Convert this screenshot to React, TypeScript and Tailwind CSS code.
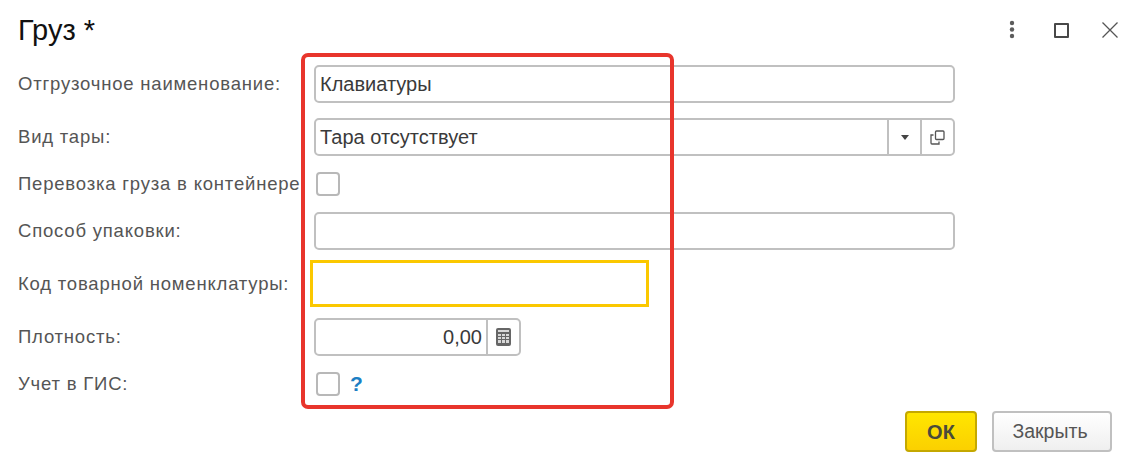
const Label = ({ children }: { children: string }) => (
  <div className="w-[297px] shrink-0 pl-[18px] whitespace-nowrap text-[18.5px] leading-[24px] tracking-[0.8px] text-[#555555]">{children}</div>
)

const Checkbox = () => (
  <div className="w-[24px] h-[24px] ml-[19px] rounded-[4px] border-2 border-[#b8b8b8] bg-white" />
)

const fieldClass = "h-[38px] ml-[17px] rounded-[5px] border-2 border-[#c0c0c0] bg-white flex items-center"

export default function App() {
  return (
    <div className="relative w-[1138px] h-[469px] bg-white overflow-hidden" style={{ fontFamily: '"Liberation Sans", Arial, sans-serif' }}>
      <div className="h-[65px] flex items-start">
        <h1 className="pl-[18px] pt-[13px] text-[29px] leading-[34px] text-[#111111] flex-1">Груз *</h1>
        <div className="flex items-center pt-[20px] pr-[20px]">
          <svg width="8" height="20" viewBox="0 0 8 20" className="mr-[38px]" fill="#5c5c5c">
            <circle cx="4" cy="3" r="2.2" />
            <circle cx="4" cy="9.5" r="2.2" />
            <circle cx="4" cy="16" r="2.2" />
          </svg>
          <div className="w-[15px] h-[15px] mr-[33px] border-2 border-[#484848] rounded-[1px]" />
          <svg width="16" height="16" viewBox="0 0 16 16" fill="none" stroke="#555555" strokeWidth="1.3">
            <path d="M0.5 0.5 L15.5 15.5 M15.5 0.5 L0.5 15.5" />
          </svg>
        </div>
      </div>

      <div className="flex items-center">
        <Label>Отгрузочное наименование:</Label>
        <div className={`${fieldClass} w-[641px] pl-[4px] text-[20px] text-[#3a3a3a]`}>Клавиатуры</div>
      </div>

      <div className="flex items-center mt-[15px]">
        <Label>Вид тары:</Label>
        <div className={`${fieldClass} w-[641px] text-[20px] text-[#3a3a3a]`}>
          <div className="flex-1 pl-[4px]">Тара отсутствует</div>
          <div className="w-[33px] h-full border-l-2 border-[#c0c0c0] flex items-center justify-center">
            <svg width="8" height="5" viewBox="0 0 8 5" fill="#444444"><path d="M0 0 H8 L4 5 Z" /></svg>
          </div>
          <div className="w-[33px] h-full border-l-2 border-[#c0c0c0] flex items-center justify-center">
            <svg width="15" height="15" viewBox="0 0 15 15" fill="none" stroke="#555555" strokeWidth="1.3">
              <rect x="5.5" y="1" width="8.5" height="8.5" rx="1" />
              <path d="M3.5 5 H1 V13 Q1 14 2 14 H9 V11.5" />
            </svg>
          </div>
        </div>
      </div>

      <div className="flex items-center mt-[16px]">
        <Label>Перевозка груза в контейнере</Label>
        <Checkbox />
      </div>

      <div className="flex items-center mt-[16px]">
        <Label>Способ упаковки:</Label>
        <div className={`${fieldClass} w-[641px]`} />
      </div>

      <div className="flex items-center mt-[10px]">
        <Label>Код товарной номенклатуры:</Label>
        <div className="w-[339px] h-[47px] ml-[13px] border-[3px] border-[#fbc800] bg-white" />
      </div>

      <div className="flex items-center mt-[11px]">
        <Label>Плотность:</Label>
        <div className={`${fieldClass} w-[207px] text-[20px] text-[#3a3a3a]`}>
          <div className="flex-1 pr-[4px] text-right">0,00</div>
          <div className="w-[33px] h-full border-l-2 border-[#c0c0c0] flex items-center justify-center">
            <svg width="15" height="18" viewBox="0 0 15 18">
              <rect width="15" height="18" rx="2" fill="#666666" />
              <rect x="2" y="2" width="11" height="2" fill="#d8d8d8" />
              <path d="M2 6h3v2H2zM6 6h3v2H6zM10 6h3v2h-3zM2 9h3v2H2zM6 9h3v2H6zM10 9h3v2h-3zM2 12h3v3H2zM6 12h3v3H6zM10 12h3v3h-3z" fill="#d8d8d8" />
            </svg>
          </div>
        </div>
      </div>

      <div className="flex items-center mt-[16px]">
        <Label>Учет в ГИС:</Label>
        <Checkbox />
        <span className="ml-[10px] text-[21px] leading-[24px] font-bold text-[#1c7fc4]">?</span>
      </div>

      <div className="flex justify-end mt-[15px] pr-[26px] gap-[15px]">
        <button className="w-[72px] h-[41px] rounded-[4px] border-2 border-[#c4a800] bg-gradient-to-b from-[#ffe600] to-[#fbd000] text-[20px] font-bold text-[#4a4a3a]">ОК</button>
        <button className="w-[120px] h-[41px] pr-[4px] rounded-[4px] border-2 border-[#c0c0c0] bg-gradient-to-b from-white to-[#efefef] text-[19.5px] text-[#555555]">Закрыть</button>
      </div>

      <div className="absolute left-[301px] top-[53px] w-[373px] h-[356px] border-[4px] border-[#e8352c] rounded-[7px] pointer-events-none" />
    </div>
  )
}
